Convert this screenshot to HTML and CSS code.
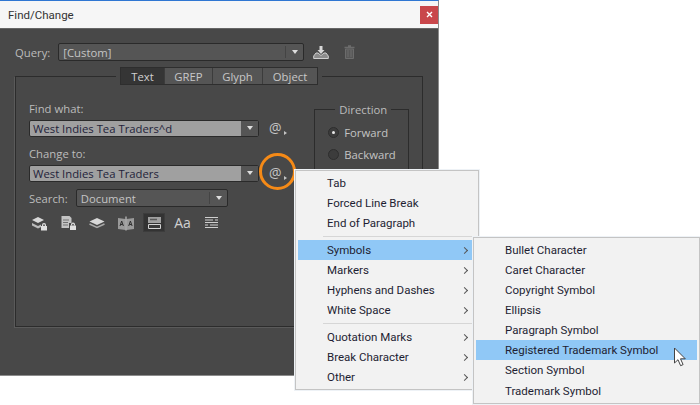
FILE: index.html
```html
<!DOCTYPE html>
<html lang="en">
<head>
  <meta charset="UTF-8">
  <title>Find/Change</title>
  <link rel="stylesheet" href="styles.css">
</head>
<body>
  <div class="window">
    <header class="titlebar">
      <span class="title">Find/Change</span>
      <span class="close">
        <svg width="7" height="7" viewBox="0 0 7 7"><path d="M1 1l5 5M6 1l-5 5" stroke="#fff" stroke-width="1.4"/></svg>
      </span>
    </header>
    <div class="dialog">
      <div class="query-row">
        <span class="label">Query:</span>
        <div class="select query-select">
          <span class="select-text">[Custom]</span>
          <span class="arrow"></span>
        </div>
        <svg class="tool-icon" width="16" height="14" viewBox="0 0 16 14">
          <path d="M8 1v5" stroke="#d8d8d8" stroke-width="3"/>
          <path d="M4.5 5h7L8 9z" fill="#d8d8d8"/>
          <path d="M3 8L.7 11v2.500h14.600V11L13 8h-2L8 10.500 5 8z" fill="#8c8c8c" stroke="#d0d0d0"/>
        </svg>
        <svg class="tool-icon trash" width="11" height="14" viewBox="0 0 11 14">
          <path d="M4 1h3M.5 2.500h10" stroke="#6c6c6c" stroke-width="1.400"/>
          <path d="M1.500 4h8v9.500h-8z" fill="#585858" stroke="#6c6c6c"/>
          <path d="M4 5v7M7 5v7" stroke="#6c6c6c"/>
        </svg>
      </div>

      <div class="tabs">
        <span class="tab active">Text</span>
        <span class="tab grep">GREP</span>
        <span class="tab glyph">Glyph</span>
        <span class="tab object">Object</span>
      </div>

      <section class="panel">
        <div class="fields">
          <label class="field-label">Find what:</label>
          <div class="field-row">
            <div class="combo"><span class="combo-text">West Indies Tea Traders^d</span><span class="combo-btn"><span class="arrow"></span></span></div>
            <span class="at">@<i class="at-arrow"></i></span>
          </div>
          <label class="field-label change-label">Change to:</label>
          <div class="field-row">
            <div class="combo"><span class="combo-text">West Indies Tea Traders</span><span class="combo-btn"><span class="arrow"></span></span></div>
            <span class="at">@<i class="at-arrow"></i><span class="ring"></span></span>
          </div>
          <div class="search-row">
            <span class="label">Search:</span>
            <div class="select search-select">
              <span class="select-text">Document</span>
              <span class="arrow"></span>
            </div>
          </div>
          <div class="options">
            <span class="opt">
              <svg width="18" height="16" viewBox="0 0 18 16">
                <path d="M1 5l6-3 6 3-6 3z" fill="#d8d8d8"/>
                <path d="M1 8l6 3 3-1.500V12l-3 1.500-6-3z" fill="#bcbcbc"/>
                <path d="M11 10a2 2 0 0 1 4 0v1h-1.200v-1a.8.8 0 0 0-1.600 0v1H11z" fill="#e0e0e0"/>
                <rect x="10" y="11" width="6" height="4.500" fill="#e0e0e0"/>
              </svg>
            </span>
            <span class="opt">
              <svg width="18" height="16" viewBox="0 0 18 16">
                <path d="M1.500 1h8l2 2v5H9v5H1.500z" fill="#c4c4c4"/>
                <path d="M3 5h6M3 7.500h5M3 10h5" stroke="#707070"/>
                <path d="M11 9.500a2 2 0 0 1 4 0v1h-1.200v-1a.8.8 0 0 0-1.600 0v1H11z" fill="#e0e0e0"/>
                <rect x="10" y="10.500" width="6" height="4.500" fill="#e0e0e0"/>
              </svg>
            </span>
            <span class="opt">
              <svg width="18" height="16" viewBox="0 0 18 16">
                <path d="M1.500 6.500L9 3l7.500 3.500L9 10z" fill="#d8d8d8"/>
                <path d="M1.500 9L9 12.500 16.500 9" fill="none" stroke="#a8a8a8" stroke-width="1.500"/>
              </svg>
            </span>
            <span class="opt">
              <svg width="18" height="16" viewBox="0 0 18 16">
                <path d="M1 3l7.500 1v11L1 14z" fill="#9a9a9a"/>
                <path d="M17 3L9.500 4v11L17 14z" fill="#9a9a9a"/>
                <path d="M3 11l1.700-5 1.700 5M3.700 9.500h2M11.700 11l1.700-5 1.700 5M12.400 9.500h2" fill="none" stroke="#2e2e2e"/>
                <path d="M9 1.500v14" stroke="#d8d8d8"/>
              </svg>
            </span>
            <span class="opt opt-on">
              <svg width="13" height="12" viewBox="0 0 13 12">
                <path d="M0 0h13v6H0z" fill="#a0a0a0"/>
                <path d="M2 2.500h7" stroke="#5a5a5a" stroke-width="1.500"/>
                <path d="M.5 7.500h12v4H.5z" fill="#3a3a3a" stroke="#d4d4d4"/>
              </svg>
            </span>
            <span class="opt opt-case">Aa</span>
            <span class="opt">
              <svg width="13" height="14" viewBox="0 0 13 14">
                <path d="M0 1.500h13M0 4h8M10 4h3M0 6.500h13M0 9h3M5 9h8M0 11.500h13" stroke="#cfcfcf"/>
              </svg>
            </span>
          </div>
        </div>

        <fieldset class="direction">
          <legend>Direction</legend>
          <div class="radio-row"><span class="radio on"></span>Forward</div>
          <div class="radio-row"><span class="radio"></span>Backward</div>
        </fieldset>
      </section>
    </div>
  </div>

  <ul class="menu main-menu">
    <li>Tab</li>
    <li>Forced Line Break</li>
    <li>End of Paragraph</li>
    <li class="sep"></li>
    <li class="sub hover">Symbols</li>
    <li class="sub">Markers</li>
    <li class="sub">Hyphens and Dashes</li>
    <li class="sub">White Space</li>
    <li class="sep"></li>
    <li class="sub">Quotation Marks</li>
    <li class="sub">Break Character</li>
    <li class="sub">Other</li>
  </ul>

  <ul class="menu sub-menu">
    <li>Bullet Character</li>
    <li>Caret Character</li>
    <li>Copyright Symbol</li>
    <li>Ellipsis</li>
    <li>Paragraph Symbol</li>
    <li class="hover">Registered Trademark Symbol</li>
    <li>Section Symbol</li>
    <li>Trademark Symbol</li>
  </ul>

  <svg class="cursor" width="14" height="20" viewBox="0 0 14 20">
    <path d="M1.500 1v15l3.500-3.300 2.600 6 2.500-1.100-2.600-5.800h4.800z" fill="#fff" stroke="#444"/>
  </svg>
</body>
</html>
```

FILE: styles.css
```css
* {
  margin: 0;
  padding: 0;
  box-sizing: border-box;
}

body {
  width: 700px;
  height: 405px;
  background: #fff;
  font-family: "Open Sans", sans-serif;
  font-size: 11.3px;
  overflow: hidden;
  position: relative;
}

/* Window */
.window {
  width: 439px;
  height: 376px;
  border-top: 1px solid #2f76d2;
  border-bottom: 1px solid #8c8c8c;
  border-right: 1px solid #8c8c8c;
  display: flex;
  flex-direction: column;
}

.titlebar {
  height: 27px;
  background: #f6f6f6;
  display: flex;
  align-items: center;
  justify-content: space-between;
  padding: 0 0 0 8px;
  color: #333;
}

.title {
  font-family: Roboto, sans-serif;
  font-size: 11.5px;
}

.close {
  width: 18px;
  height: 18px;
  background: #c9474b;
  display: flex;
  align-items: center;
  justify-content: center;
}

.dialog {
  flex: 1;
  background: #484848;
  color: #c2c2c2;
  padding: 14px 15px 0;
  border-top: 1px solid #666;
}

/* Query row */
.query-row {
  display: flex;
  align-items: center;
  height: 18px;
}

.label {
  color: #bcbcbc;
}

.select {
  height: 18px;
  background: #555;
  border: 1px solid #2a2a2a;
  border-radius: 2px;
  display: flex;
  align-items: center;
  position: relative;
  color: #c4c4c4;
  padding-left: 4px;
}

.query-select {
  width: 246px;
  margin-left: 8px;
}

.select-text {
  flex: 1;
}

.select .arrow {
  margin-right: 5px;
}

.select::after {
  content: "";
  position: absolute;
  right: 17px;
  top: 2px;
  bottom: 2px;
  width: 1px;
  background: #444;
}

.arrow {
  width: 0;
  height: 0;
  border-left: 3.500px solid transparent;
  border-right: 3.500px solid transparent;
  border-top: 4px solid #dedede;
}

.tool-icon {
  margin-left: 9px;
  flex-shrink: 0;
}

.trash {
  margin-left: 15px;
}

/* Tabs */
.tabs {
  display: flex;
  width: 198px;
  height: 18px;
  margin: 6px 0 0 105px;
  border: 1px solid #2e2e2e;
  position: relative;
  z-index: 1;
  box-shadow: 0 0 0 4px #484848;
  background: #555;
}

.tab {
  display: flex;
  align-items: center;
  justify-content: center;
  color: #c8c8c8;
  border-right: 1px solid #3c3c3c;
}

.tab.active {
  background: #353535;
  color: #d0d0d0;
  width: 44px;
}

.tab.grep {
  width: 48px;
}

.tab.glyph {
  width: 50px;
}

.tab.object {
  flex: 1;
  border-right: 0;
}

/* Panel */
.panel {
  width: 408px;
  height: 251px;
  margin-top: -9px;
  border: 1px solid #2c2c2c;
  box-shadow: -1px 1px 0 #5a5a5a;
  padding: 24px 13px 0 13px;
  display: flex;
}

.fields {
  width: 270px;
}

.field-label {
  display: block;
  height: 16px;
  line-height: 16px;
  color: #bcbcbc;
}

.change-label {
  margin-top: 9px;
}

.field-row {
  display: flex;
  align-items: center;
  margin-top: 2px;
  height: 18px;
}

.combo {
  width: 230px;
  height: 17px;
  display: flex;
  border: 1px solid #2a2a2a;
  border-radius: 2px;
  background: #a0a0a0;
}

.combo-text {
  flex: 1;
  color: #1f1f3a;
  padding-left: 3px;
  line-height: 15px;
}

.combo-btn {
  width: 17px;
  background: #555;
  display: flex;
  align-items: center;
  justify-content: center;
}

.at {
  position: relative;
  margin-left: 10px;
  font-size: 14px;
  color: #c4c4c4;
  line-height: 18px;
}

.at-arrow {
  position: absolute;
  right: -5px;
  bottom: 2px;
  width: 0;
  height: 0;
  border-left: 3px solid #c4c4c4;
  border-top: 2px solid transparent;
  border-bottom: 2px solid transparent;
}

.ring {
  position: absolute;
  left: -10px;
  top: -11px;
  width: 37px;
  height: 37px;
  border: 3px solid #f58a17;
  border-radius: 50%;
}

.search-row {
  display: flex;
  align-items: center;
  margin-top: 7px;
  height: 18px;
}

.search-select {
  width: 152px;
  margin-left: 8px;
}

/* Option icons */
.options {
  display: flex;
  align-items: center;
  margin-top: 6px;
  gap: 6.500px;
}

.opt {
  width: 22px;
  height: 19px;
  display: flex;
  align-items: center;
  justify-content: center;
  color: #d0d0d0;
}

.opt-on {
  background: #333;
  border: 1px solid #3c3c3c;
}

.opt-case {
  font-size: 14px;
}

/* Direction */
.direction {
  width: 95px;
  height: 130px;
  margin-left: 16px;
  margin-top: 1px;
  border: 1px solid #2c2c2c;
  padding: 4px 0 0 13px;
}

.direction legend {
  margin-left: 7px;
  padding: 0 4px;
  color: #bcbcbc;
}

.radio-row {
  display: flex;
  align-items: center;
  gap: 5px;
  height: 22px;
  color: #c4c4c4;
}

.radio {
  width: 11px;
  height: 11px;
  border-radius: 50%;
  background: #3c3c3c;
  border: 1px solid #2e2e2e;
  display: flex;
  align-items: center;
  justify-content: center;
}

.radio.on::after {
  content: "";
  width: 3px;
  height: 3px;
  border-radius: 50%;
  background: #e8e8e8;
}

/* Context menus */
.menu {
  position: absolute;
  list-style: none;
  background: #f2f2f2;
  border: 1px solid #c4c4c4;
  color: #1e1e32;
  font-family: Roboto, sans-serif;
  font-size: 11.5px;
  box-shadow: 0 0 0 1px #eef2f6;
}

.menu li {
  height: 20px;
  line-height: 20px;
  padding-left: 29px;
  position: relative;
}

.menu li.hover {
  background: #90c8f6;
}

.menu li.sep {
  height: 1px;
  margin: 3px 0 3px 25px;
  background: #d6d6d6;
}

.menu li.sub::after {
  content: "";
  position: absolute;
  right: 9px;
  top: 8px;
  width: 4px;
  height: 4px;
  border-top: 1px solid #555;
  border-right: 1px solid #555;
  transform: rotate(45deg);
}

.main-menu {
  left: 295px;
  top: 170px;
  width: 184px;
  height: 220px;
  padding: 2px;
}

.sub-menu {
  left: 473px;
  top: 237px;
  width: 227px;
  height: 167px;
  padding: 2px;
}

.sub-menu li:last-child {
  margin-top: 1px;
}

.cursor {
  position: absolute;
  left: 673px;
  top: 347px;
}
```
